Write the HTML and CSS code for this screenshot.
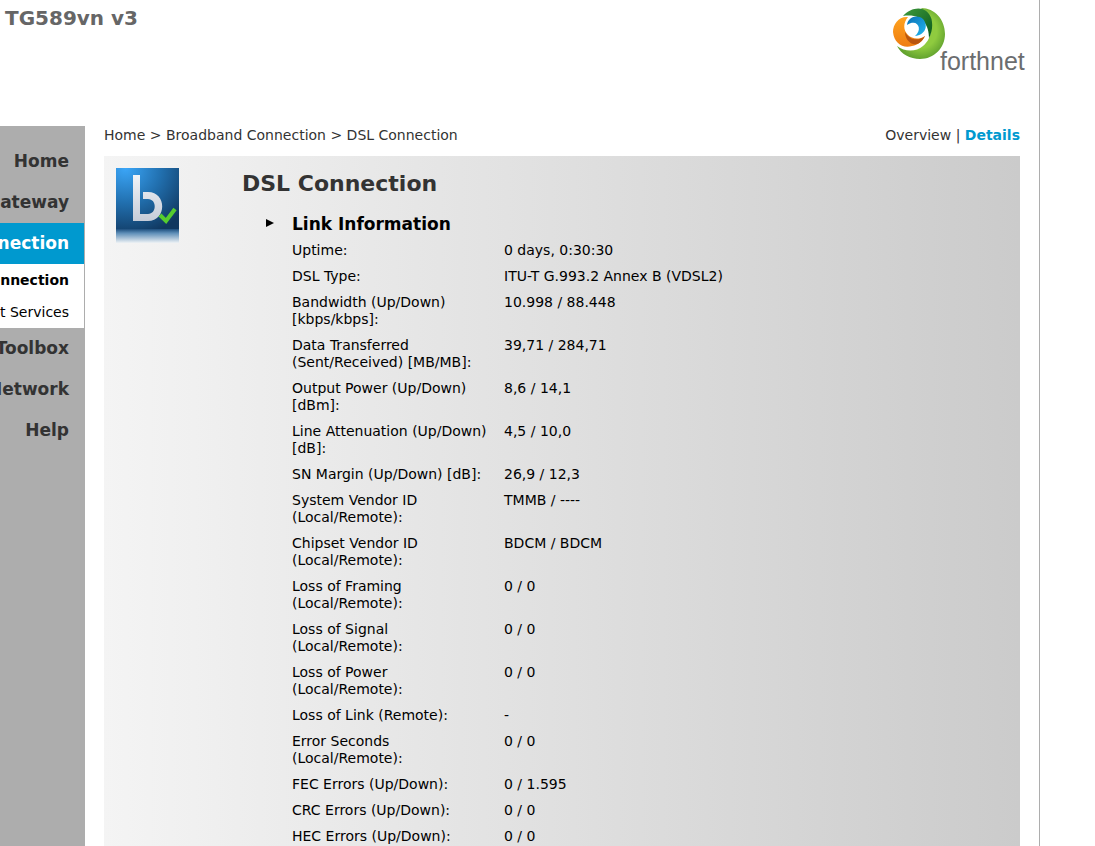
FILE: index.html
```html
<!DOCTYPE html>
<html lang="en">
<head>
  <meta charset="UTF-8">
  <meta name="viewport" content="width=device-width,initial-scale=1">
  <title>DSL Connection</title>
  <link rel="stylesheet" href="styles.css">
</head>
<body>

<div class="page">
  <header class="header">
    <div class="model">TG589vn v3</div>
    <svg class="logo" width="136" height="68" viewBox="0 0 136 68" role="img" aria-label="forthnet">
      <defs>
        <radialGradient id="lime" cx=".5" cy=".45" r=".55">
          <stop offset=".6" stop-color="#8fcb3f"/>
          <stop offset="1" stop-color="#63a32f"/>
        </radialGradient>
        <linearGradient id="forest" x1="0" y1="0" x2="1" y2="1">
          <stop offset="0" stop-color="#3f9a3c"/>
          <stop offset="1" stop-color="#0b5a1c"/>
        </linearGradient>
        <linearGradient id="orange" x1="0" y1="0" x2="0" y2="1">
          <stop offset="0" stop-color="#ffa31f"/>
          <stop offset="1" stop-color="#ee7d12"/>
        </linearGradient>
        <linearGradient id="sky" x1="0" y1="0" x2="1" y2="1">
          <stop offset="0" stop-color="#0b6fb5"/>
          <stop offset="1" stop-color="#22b8f0"/>
        </linearGradient>
      </defs>
      <path d="M28 0C42 0 52 12 52 26C52 40 41 51 27 51C17 51 8 46 4 38C12 44 23 44 30 38C40 30 42 13 28 0Z" fill="url(#lime)"/>
      <path d="M10 8C19-2 34-3 38.500 11C40 18 39 24 36 30C36 17 29 5 10 8Z" fill="url(#forest)"/>
      <path d="M15 9C6 8 0 16 0 24C1 35 10 41 19 38C25 37 30 33 32 28C26 32 19 31 15 27C10 22 10 15 15 9Z" fill="url(#orange)"/>
      <path d="M12 24C17 33 26 33 32 28C29 34 25 37 20 36C16 35 12 30 12 24Z" fill="#b9560f"/>
      <path d="M14 17C15 9 24 6 30 11C36 18 32 27 22 28C30 22 25 10 14 17Z" fill="url(#sky)"/>
      <text class="logo-text" x="47" y="62">forthnet</text>
    </svg>
  </header>

  <div class="columns">
    <nav class="sidebar">
      <ul class="menu">
        <li><a href="#">Home</a></li>
        <li><a href="#">Gateway</a></li>
        <li class="active">
          <a href="#">Connection</a>
          <ul class="submenu">
            <li><a class="current" href="#">Connection</a></li>
            <li><a href="#">Internet Services</a></li>
          </ul>
        </li>
        <li><a href="#">Toolbox</a></li>
        <li><a href="#">Network</a></li>
        <li><a href="#">Help</a></li>
      </ul>
    </nav>

    <main class="content">
      <div class="topline">
        <div class="breadcrumb"><a href="#">Home</a> &gt; <a href="#">Broadband Connection</a> &gt; <a href="#">DSL Connection</a></div>
        <div class="views"><a href="#">Overview</a> | <a class="selected" href="#">Details</a></div>
      </div>

      <section class="panel">
        <svg class="panel-icon" width="63" height="75" viewBox="0 0 63 75" aria-hidden="true">
          <defs>
            <radialGradient id="tile" cx=".15" cy="0" r="1.15">
              <stop offset="0" stop-color="#3ba6f8"/>
              <stop offset=".5" stop-color="#216fae"/>
              <stop offset="1" stop-color="#10375f"/>
            </radialGradient>
            <linearGradient id="fade" x1="0" y1="0" x2="0" y2="1">
              <stop offset="0" stop-color="#1d4e7e"/>
              <stop offset=".3" stop-color="#5f8fb8"/>
              <stop offset="1" stop-color="#eef2f5"/>
            </linearGradient>
            <linearGradient id="letter" x1="0" y1="0" x2="0" y2="1">
              <stop offset="0" stop-color="#f1f3f7"/>
              <stop offset="1" stop-color="#c6ccd8"/>
            </linearGradient>
          </defs>
          <rect width="63" height="61" fill="url(#tile)"/>
          <rect y="61" width="63" height="14" fill="url(#fade)"/>
          <path d="M17 7H24V46H32C41 46 41 31 32 31H27V24H32C51 24 51 53 32 53H17Z" fill="url(#letter)"/>
          <path d="M44 47L50 53L59 41" fill="none" stroke="#56cc2e" stroke-width="4"/>
        </svg>

        <div class="details">
          <h1>DSL Connection</h1>
          <h2>Link Information</h2>
          <table class="info">
            <tbody>
              <tr><th scope="row">Uptime:</th><td>0 days, 0:30:30</td></tr>
              <tr><th scope="row">DSL Type:</th><td>ITU-T G.993.2 Annex B (VDSL2)</td></tr>
              <tr><th scope="row">Bandwidth (Up/Down) [kbps/kbps]:</th><td>10.998 / 88.448</td></tr>
              <tr><th scope="row">Data Transferred (Sent/Received) [MB/MB]:</th><td>39,71 / 284,71</td></tr>
              <tr><th scope="row">Output Power (Up/Down) [dBm]:</th><td>8,6 / 14,1</td></tr>
              <tr><th scope="row">Line Attenuation (Up/Down) [dB]:</th><td>4,5 / 10,0</td></tr>
              <tr><th scope="row">SN Margin (Up/Down) [dB]:</th><td>26,9 / 12,3</td></tr>
              <tr><th scope="row">System Vendor ID (Local/Remote):</th><td>TMMB / ----</td></tr>
              <tr><th scope="row">Chipset Vendor ID (Local/Remote):</th><td>BDCM / BDCM</td></tr>
              <tr><th scope="row">Loss of Framing (Local/Remote):</th><td>0 / 0</td></tr>
              <tr><th scope="row">Loss of Signal (Local/Remote):</th><td>0 / 0</td></tr>
              <tr><th scope="row">Loss of Power (Local/Remote):</th><td>0 / 0</td></tr>
              <tr><th scope="row">Loss of Link (Remote):</th><td>-</td></tr>
              <tr><th scope="row">Error Seconds (Local/Remote):</th><td>0 / 0</td></tr>
              <tr><th scope="row">FEC Errors (Up/Down):</th><td>0 / 1.595</td></tr>
              <tr><th scope="row">CRC Errors (Up/Down):</th><td>0 / 0</td></tr>
              <tr><th scope="row">HEC Errors (Up/Down):</th><td>0 / 0</td></tr>
            </tbody>
          </table>
        </div>
      </section>
    </main>
  </div>
</div>

</body>
</html>
```
FILE: styles.css
```css
:root {
  --grey: #adadad;
  --text: #333;
  --blue: #0099cf;
}
* { box-sizing: border-box; margin: 0; padding: 0; }
body {
  font-family: Verdana, "DejaVu Sans", sans-serif;
  font-size: 14px;
  line-height: 17px;
  color: #000;
  background: #fff;
}
a { color: inherit; text-decoration: none; }
ul { list-style: none; }

.page {
  display: flex; flex-direction: column;
  max-width: 1040px; min-height: 100vh;
  border-right: 1px solid var(--grey);
}

/* Header */
.header {
  display: flex; justify-content: space-between; align-items: flex-start;
  height: 126px;
  padding: 8px 10px 0 5px;
}
.model {
  font-size: 20px; line-height: 20px; font-weight: bold;
  color: #666;
}
.logo-text {
  font-family: "Liberation Sans", Arial, sans-serif;
  font-size: 25px;
  fill: #6b6d6f;
}

.columns { display: flex; flex: 1; }

/* Left menu */
.sidebar {
  flex: 0 0 85px;
  overflow: hidden;
  padding-top: 15px;
  background: var(--grey);
  border-right: 1px solid var(--grey);
}
.menu a {
  display: flex; justify-content: flex-end;
  padding-right: 15px;
  font-size: 17px; line-height: 41px; font-weight: bold;
  white-space: nowrap;
  color: var(--text);
}
.menu .active > a { background: var(--blue); color: #fff; }
.submenu { background: #fff; }
.menu .submenu a {
  font-size: 14px; line-height: 32px; font-weight: normal;
  color: #000;
}
.menu .submenu .current { font-weight: bold; }

/* Content */
.content {
  display: flex; flex-direction: column; flex: 1;
  padding: 0 19px;
}
.topline {
  display: flex; justify-content: space-between;
  height: 30px;
  padding-top: 1px;
  color: var(--text);
}
.selected { color: var(--blue); font-weight: bold; }

.panel {
  display: flex; align-items: flex-start; flex: 1;
  padding: 12px;
  background: linear-gradient(to right, #f4f4f4, #cbcbcb);
}
.panel-icon { flex: none; margin-right: 63px; }
h1 {
  font-size: 22px; line-height: 32px;
  color: var(--text);
}
h2 {
  position: relative;
  margin-left: 50px;
  padding: 14px 0 4px;
  font-size: 17px; line-height: 20px;
}
h2::before {
  content: "";
  position: absolute; left: -26px; top: 19px;
  border: 4px solid transparent;
  border-left: 8px solid #000;
  border-right: 0;
}

/* Link values */
.info { margin-left: 50px; border-collapse: collapse; }
.info th, .info td {
  padding: 4px 0 5px;
  font-weight: normal; text-align: left; vertical-align: top;
}
.info th { width: 212px; padding-right: 12px; }
```
